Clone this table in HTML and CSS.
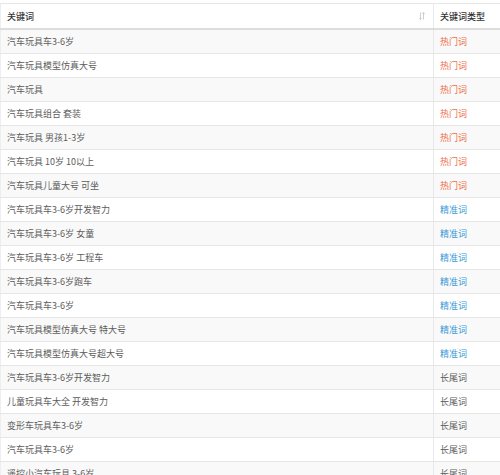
FILE: index.html
```html
<!DOCTYPE html>
<html>
<head>
<meta charset="utf-8">
<link rel="stylesheet" href="styles.css">
</head>
<body>
<div class="wrap">
<table class="kw">
<thead>
<tr>
<th class="c1"><div class="th-in"><span>关键词</span><svg class="sort" width="6" height="8" viewBox="0 0 6 8"><path d="M1.5 0.5V7.5M0.3 6.2L1.5 7.5L2.7 6.2M4.5 7.5V0.5M3.3 1.8L4.5 0.5L5.7 1.8" stroke="#c8c8c8" stroke-width="0.9" fill="none"/></svg></div></th>
<th class="c2">关键词类型</th>
</tr>
</thead>
<tbody>
<tr><td>汽车玩具车3-6岁</td><td class="hot">热门词</td></tr>
<tr><td>汽车玩具模型仿真大号</td><td class="hot">热门词</td></tr>
<tr><td>汽车玩具</td><td class="hot">热门词</td></tr>
<tr><td>汽车玩具组合 套装</td><td class="hot">热门词</td></tr>
<tr><td>汽车玩具 男孩1-3岁</td><td class="hot">热门词</td></tr>
<tr><td>汽车玩具 10岁 10以上</td><td class="hot">热门词</td></tr>
<tr><td>汽车玩具儿童大号 可坐</td><td class="hot">热门词</td></tr>
<tr><td>汽车玩具车3-6岁开发智力</td><td class="exact">精准词</td></tr>
<tr><td>汽车玩具车3-6岁 女童</td><td class="exact">精准词</td></tr>
<tr><td>汽车玩具车3-6岁 工程车</td><td class="exact">精准词</td></tr>
<tr><td>汽车玩具车3-6岁跑车</td><td class="exact">精准词</td></tr>
<tr><td>汽车玩具车3-6岁</td><td class="exact">精准词</td></tr>
<tr><td>汽车玩具模型仿真大号 特大号</td><td class="exact">精准词</td></tr>
<tr><td>汽车玩具模型仿真大号超大号</td><td class="exact">精准词</td></tr>
<tr><td>汽车玩具车3-6岁开发智力</td><td class="long">长尾词</td></tr>
<tr><td>儿童玩具车大全 开发智力</td><td class="long">长尾词</td></tr>
<tr><td>变形车玩具车3-6岁</td><td class="long">长尾词</td></tr>
<tr><td>汽车玩具车3-6岁</td><td class="long">长尾词</td></tr>
<tr><td>遥控小汽车玩具 3-6岁</td><td class="long">长尾词</td></tr>
</tbody>
</table>
</div>
</body>
</html>
```

FILE: styles.css
```css
html, body {
  margin: 0;
  padding: 0;
  background: #ffffff;
}
.wrap {
  padding-top: 3px;
  height: 472px;
  overflow: hidden;
}
.kw {
  width: 520px;
  border-collapse: collapse;
  font-family: "Noto Sans CJK SC", "Noto Sans", sans-serif;
  font-size: 9px;
  color: #5c5c5c;
  border-left: 1px solid #eeeeee;
  border-top: 1px solid #e6e6e6;
}
.kw th {
  height: 24px;
  padding: 0 6px;
  text-align: left;
  font-weight: 500;
  color: #333333;
  border-bottom: 2px solid #dddddd;
  vertical-align: middle;
}
.kw th.c1 {
  width: 420px;
  border-right: 1px solid #e8e8e8;
}
.th-in {
  display: flex;
  align-items: center;
  justify-content: space-between;
}
.sort {
  display: block;
  margin-right: 2px;
}
.kw td {
  height: 23px;
  padding: 0 6px;
  border-bottom: 1px solid #e6e6e6;
  vertical-align: middle;
  line-height: 12px;
}
.kw td:first-child {
  border-right: 1px solid #e8e8e8;
}
.kw tbody tr:nth-child(odd) td {
  background: #f9f9f9;
}
.hot { color: #ef6b45; }
.exact { color: #3a9ad9; }
.long { color: #5c5c5c; }
```
